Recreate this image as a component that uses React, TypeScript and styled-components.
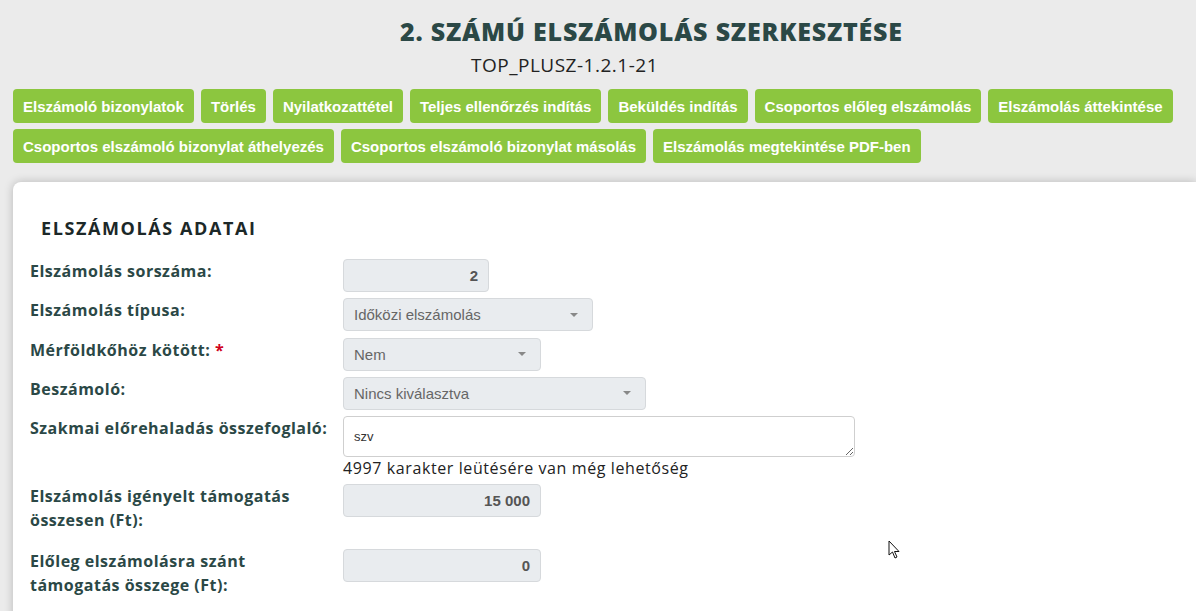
import styled, { createGlobalStyle } from 'styled-components';

const GlobalStyle = createGlobalStyle`
  html, body {
    margin: 0;
    padding: 0;
    background: #ebebeb;
    overflow: hidden;
  }
  * {
    box-sizing: border-box;
  }
`;

const Page = styled.div`
  position: relative;
  width: 1196px;
  height: 611px;
  overflow: hidden;
  background: #ebebeb;
`;

const Header = styled.div`
  display: flex;
  flex-direction: column;
  padding-top: 14px;
`;

const Title = styled.h1`
  margin: 0 0 0 400px;
  color: #2b4846;
  font-family: 'Open Sans', sans-serif;
  font-size: 25px;
  font-weight: 800;
  line-height: 34px;
  letter-spacing: 0.8px;
  white-space: nowrap;
`;

const SubTitle = styled.div`
  margin: 4px 0 0 471px;
  color: #222;
  font-family: 'Open Sans', sans-serif;
  font-size: 19px;
  font-weight: 400;
  line-height: 26px;
  letter-spacing: 0.5px;
`;

const Toolbar = styled.div`
  display: flex;
  flex-wrap: wrap;
  gap: 6px 7px;
  margin-top: 11px;
  padding: 0 13px;
  width: 1196px;
`;

const ActionButton = styled.button`
  height: 34px;
  padding: 0 10px;
  border: none;
  border-radius: 4px;
  background: #8cc63f;
  color: #fff;
  font-family: 'Liberation Sans', Arial, sans-serif;
  font-size: 15px;
  font-weight: 700;
  cursor: pointer;
`;

const Card = styled.div`
  margin: 19px 0 0 13px;
  padding: 34px 0 0 17px;
  background: #fff;
  border-radius: 8px 0 0 0;
  box-shadow: 0 0 10px rgba(0, 0, 0, 0.22);
  height: 500px;
`;

const SectionTitle = styled.h2`
  margin: 0 0 19px 11px;
  color: #1c2828;
  font-family: 'Open Sans', sans-serif;
  font-size: 18px;
  font-weight: 700;
  letter-spacing: 1.6px;
  line-height: 24px;
`;

const Form = styled.div`
  display: grid;
  grid-template-columns: 313px 1fr;
  row-gap: 6.3px;
`;

const Label = styled.div<{ $pb?: number }>`
  padding: 0 10px ${(p) => p.$pb ?? 0}px 0;
  color: #2b4846;
  font-family: 'Open Sans', sans-serif;
  font-size: 16px;
  font-weight: 700;
  line-height: 24px;
  letter-spacing: 0.5px;
`;

const Required = styled.span`
  color: #d0021b;
`;

const Field = styled.div`
  display: flex;
  flex-direction: column;
  align-items: flex-start;
`;

const ReadOnlyInput = styled.div<{ $w: number }>`
  width: ${(p) => p.$w}px;
  height: 33px;
  padding: 0 10px;
  display: flex;
  align-items: center;
  justify-content: flex-end;
  background: #e9ecef;
  border: 1px solid #d6d9dc;
  border-radius: 4px;
  color: #555;
  font-family: 'Liberation Sans', Arial, sans-serif;
  font-size: 15px;
  font-weight: 700;
`;

const Select = styled.div<{ $w: number }>`
  width: ${(p) => p.$w}px;
  height: 33px;
  padding: 0 10px;
  display: flex;
  align-items: center;
  justify-content: space-between;
  background: #e9ecef;
  border: 1px solid #d6d9dc;
  border-radius: 4px;
  color: #666;
  font-family: 'Liberation Sans', Arial, sans-serif;
  font-size: 15px;
`;

const Caret = styled.span`
  width: 0;
  height: 0;
  margin-right: 4px;
  border-left: 4px solid transparent;
  border-right: 4px solid transparent;
  border-top: 4px solid #888;
`;

const TextArea = styled.textarea`
  width: 512px;
  height: 41px;
  padding: 12px 10px 0;
  border: 1px solid #cfcfcf;
  border-radius: 4px;
  background: #fff;
  color: #333;
  font-family: 'Liberation Sans', Arial, sans-serif;
  font-size: 13px;
  resize: vertical;
`;

const Hint = styled.div`
  margin-top: 1px;
  color: #222;
  font-family: 'Open Sans', sans-serif;
  font-size: 16px;
  line-height: 20px;
  letter-spacing: 0.6px;
`;

const Cursor = styled.svg`
  position: absolute;
  left: 888px;
  top: 540px;
`;

const buttons = [
  'Elszámoló bizonylatok',
  'Törlés',
  'Nyilatkozattétel',
  'Teljes ellenőrzés indítás',
  'Beküldés indítás',
  'Csoportos előleg elszámolás',
  'Elszámolás áttekintése',
  'Csoportos elszámoló bizonylat áthelyezés',
  'Csoportos elszámoló bizonylat másolás',
  'Elszámolás megtekintése PDF-ben',
];

const App = () => {
  return (
    <Page>
      <GlobalStyle />
      <Header>
        <Title>2. SZÁMÚ ELSZÁMOLÁS SZERKESZTÉSE</Title>
        <SubTitle>TOP_PLUSZ-1.2.1-21</SubTitle>
      </Header>
      <Toolbar>
        {buttons.map((b) => (
          <ActionButton key={b}>{b}</ActionButton>
        ))}
      </Toolbar>
      <Card>
        <SectionTitle>ELSZÁMOLÁS ADATAI</SectionTitle>
        <Form>
          <Label>Elszámolás sorszáma:</Label>
          <Field>
            <ReadOnlyInput $w={146}>2</ReadOnlyInput>
          </Field>
          <Label>Elszámolás típusa:</Label>
          <Field>
            <Select $w={250}>
              Időközi elszámolás
              <Caret />
            </Select>
          </Field>
          <Label>
            Mérföldkőhöz kötött: <Required>*</Required>
          </Label>
          <Field>
            <Select $w={198}>
              Nem
              <Caret />
            </Select>
          </Field>
          <Label>Beszámoló:</Label>
          <Field>
            <Select $w={303}>
              Nincs kiválasztva
              <Caret />
            </Select>
          </Field>
          <Label>Szakmai előrehaladás összefoglaló:</Label>
          <Field>
            <TextArea defaultValue="szv" />
            <Hint>4997 karakter leütésére van még lehetőség</Hint>
          </Field>
          <Label $pb={10}>Elszámolás igényelt támogatás összesen (Ft):</Label>
          <Field>
            <ReadOnlyInput $w={198}>15 000</ReadOnlyInput>
          </Field>
          <Label $pb={10}>Előleg elszámolásra szánt támogatás összege (Ft):</Label>
          <Field>
            <ReadOnlyInput $w={198}>0</ReadOnlyInput>
          </Field>
        </Form>
      </Card>
      <Cursor width="13" height="20" viewBox="0 0 13 20">
        <path d="M1 1 L1 15 L4.5 12 L7 18 L9 17 L6.5 11.5 L11 11.5 Z" fill="#fff" stroke="#111" strokeWidth="1" strokeLinejoin="round" />
      </Cursor>
    </Page>
  );
};

export default App;
